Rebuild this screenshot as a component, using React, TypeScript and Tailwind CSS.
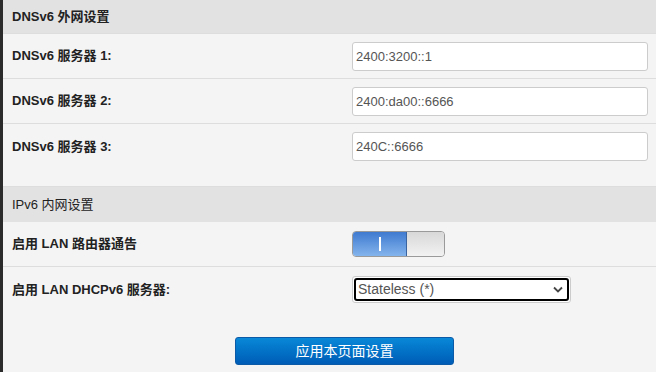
import React from "react";

const font = { fontFamily: '"Liberation Sans", Arial, "Noto Sans CJK SC", sans-serif' };

function Row({ label, children, border = true, bold = true }: { label: string; children: React.ReactNode; border?: boolean; bold?: boolean }) {
  return (
    <div className={`flex items-center h-[45px] ${border ? "border-b border-[#dddddd]" : ""}`}>
      <div className={`w-[337px] pl-[9px] text-[13px] text-[#222] ${bold ? "font-bold" : ""}`}>{label}</div>
      <div className="flex-1 pl-[12px]">{children}</div>
    </div>
  );
}

function Input({ value }: { value: string }) {
  return (
    <input
      readOnly
      value={value}
      className="w-[296px] h-[29px] bg-white border border-[#cccccc] rounded-[3px] px-[3px] text-[13px] text-[#555] outline-none"
      style={font}
    />
  );
}

export default function App() {
  return (
    <div className="w-[656px] h-[372px] flex bg-[#f4f4f4] overflow-hidden" style={font}>
      <div className="w-[3px] bg-[#2b2b2b] shrink-0" />
      <div className="flex-1 flex flex-col">
        <div className="h-[34px] bg-[#e2e2e2] flex items-center pl-[9px] text-[13px] font-bold text-[#222] border-b border-[#dddddd]">
          DNSv6 外网设置
        </div>
        <Row label="DNSv6 服务器 1:"><Input value="2400:3200::1" /></Row>
        <Row label="DNSv6 服务器 2:"><Input value="2400:da00::6666" /></Row>
        <Row label="DNSv6 服务器 3:" border={false}><Input value="240C::6666" /></Row>
        <div className="h-[18px] border-b border-[#dddddd]" />
        <div className="h-[35px] bg-[#e2e2e2] flex items-center pl-[9px] text-[13px] text-[#222]">
          IPv6 内网设置
        </div>
        <Row label="启用 LAN 路由器通告">
          <div className="flex w-[93px] h-[26px] rounded-[4px] border border-[#9a9a9a] overflow-hidden">
            <div className="w-[54px] h-full flex items-center justify-center bg-gradient-to-b from-[#3f7ad0] to-[#84b4ec] border-r border-[#3a64a0]">
              <div className="w-[2px] h-[14px] bg-white" />
            </div>
            <div className="flex-1 bg-gradient-to-b from-[#d8d8d8] to-[#f2f2f2]" />
          </div>
        </Row>
        <Row label="启用 LAN DHCPv6 服务器:" border={false}>
          <div className="w-[219px] h-[27px] border border-[#cccccc] rounded-[3px] p-[1px] bg-white">
            <div className="w-full h-full border-2 border-black rounded-[3px] flex items-center justify-between pl-[2px] pr-[4px] text-[14px] text-[#555]">
              <span>Stateless (*)</span>
              <svg width="10" height="7" viewBox="0 0 10 7"><path d="M1 1.5 L5 5.5 L9 1.5" fill="none" stroke="#444" strokeWidth="1.8" /></svg>
            </div>
          </div>
        </Row>
        <div className="flex pt-[25px] pl-[232px]">
          <div className="w-[219px] h-[28px] rounded-[3px] bg-gradient-to-b from-[#0a88d8] to-[#005cb6] border border-[#0a5aa8] flex items-center justify-center text-white text-[14px]">
            应用本页面设置
          </div>
        </div>
      </div>
    </div>
  );
}
